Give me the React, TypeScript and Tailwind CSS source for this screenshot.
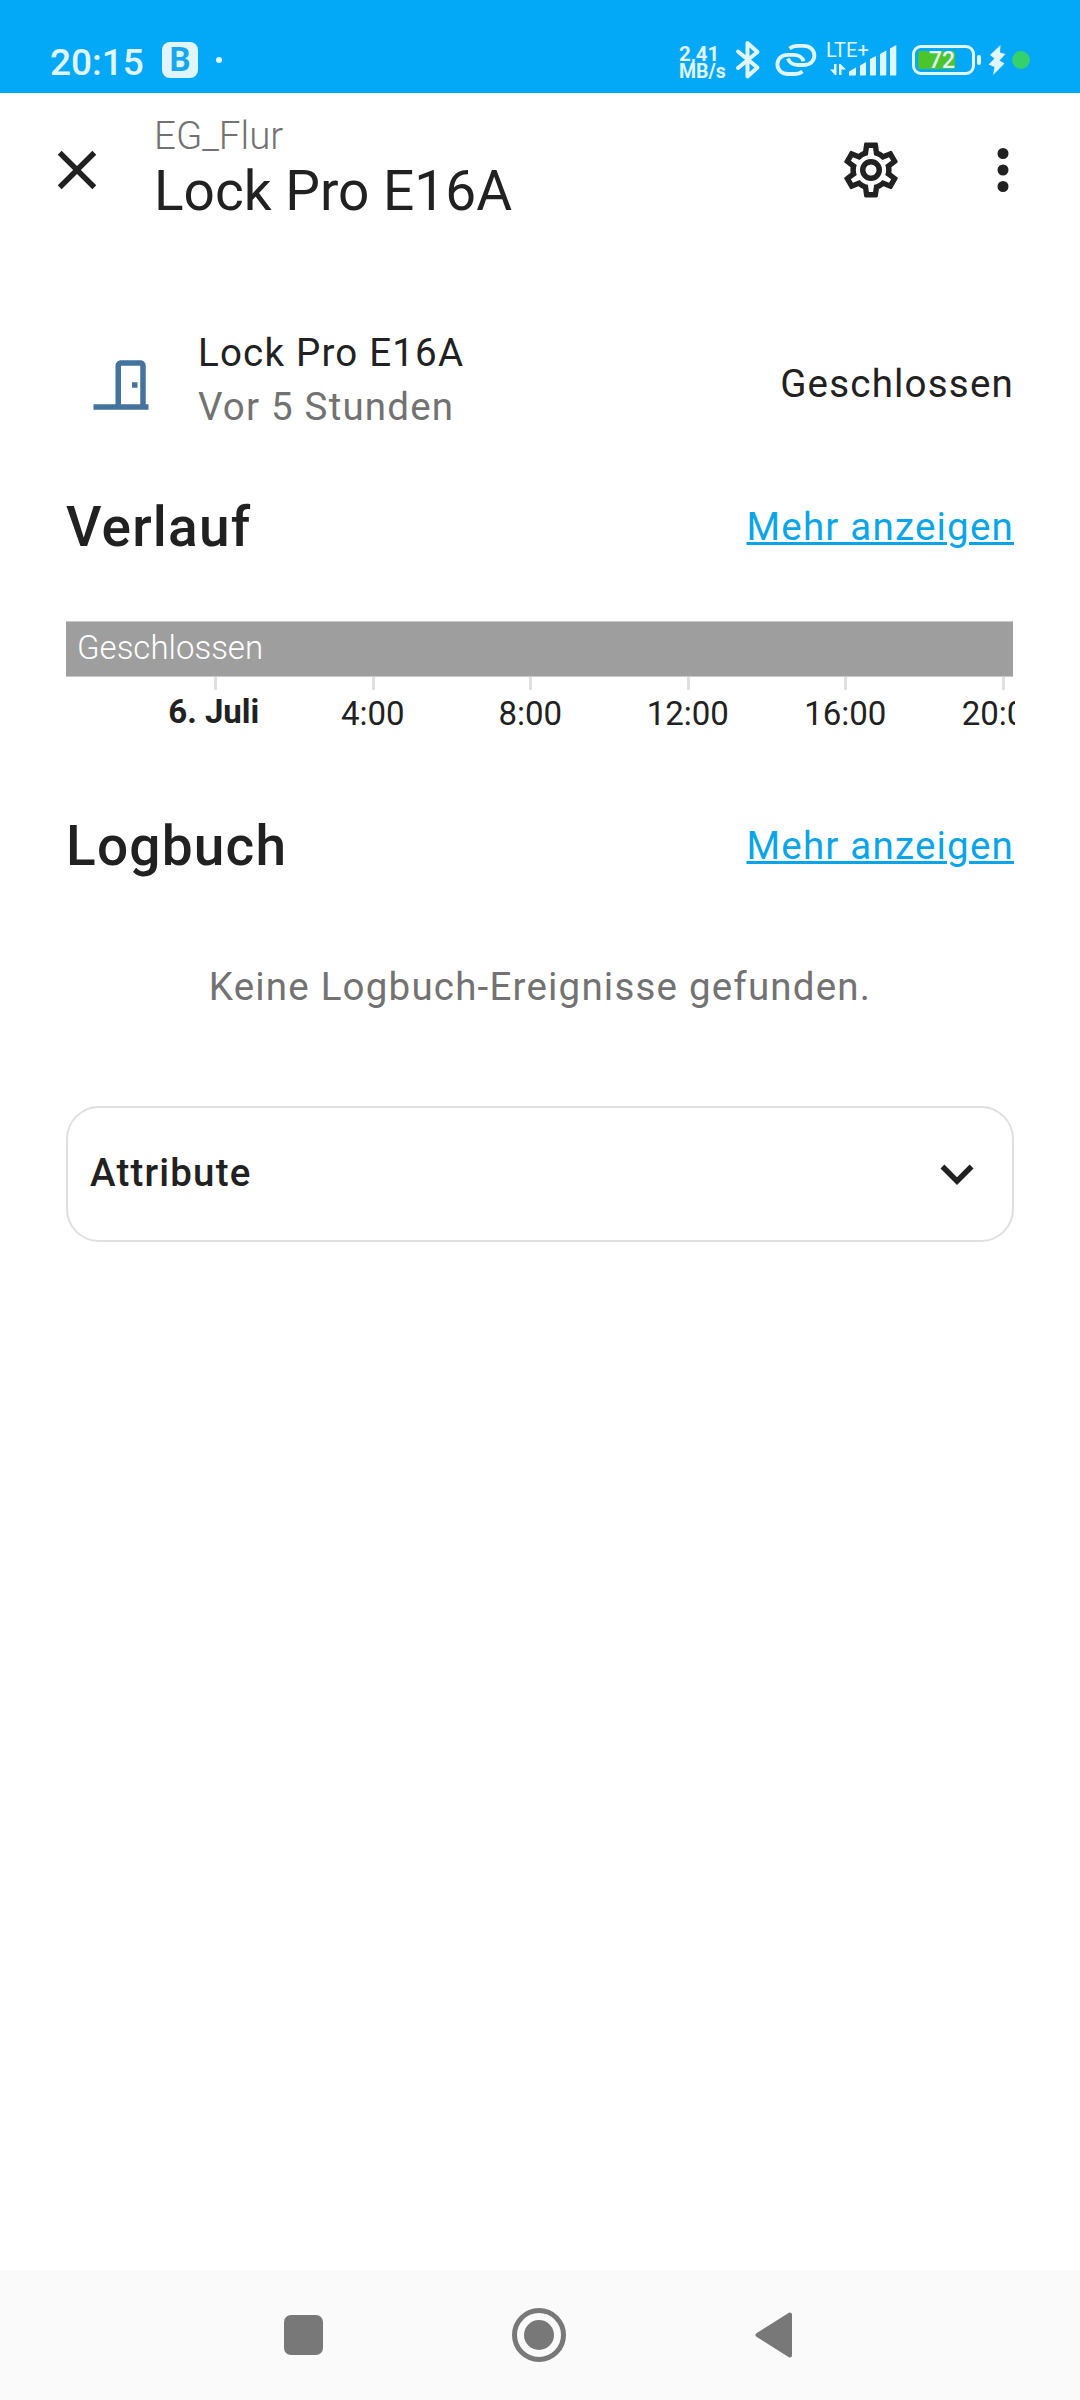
import type { ReactNode } from "react";

const icons = {
  close:
    "M19,6.41L17.59,5L12,10.59L6.41,5L5,6.41L10.59,12L5,17.59L6.41,19L12,13.41L17.59,19L19,17.59L13.41,12L19,6.41Z",
  cog: "M12,8A4,4 0 0,1 16,12A4,4 0 0,1 12,16A4,4 0 0,1 8,12A4,4 0 0,1 12,8M12,10A2,2 0 0,0 10,12A2,2 0 0,0 12,14A2,2 0 0,0 14,12A2,2 0 0,0 12,10M10,22C9.75,22 9.54,21.82 9.5,21.58L9.13,18.93C8.5,18.68 7.96,18.34 7.44,17.94L4.95,18.95C4.73,19.03 4.46,18.95 4.34,18.73L2.34,15.27C2.21,15.05 2.27,14.78 2.46,14.63L4.57,12.97L4.5,12L4.57,11L2.46,9.37C2.27,9.22 2.21,8.95 2.34,8.73L4.34,5.27C4.46,5.05 4.73,4.96 4.95,5.05L7.44,6.05C7.96,5.66 8.5,5.32 9.13,5.07L9.5,2.42C9.54,2.18 9.75,2 10,2H14C14.25,2 14.46,2.18 14.5,2.42L14.87,5.07C15.5,5.32 16.04,5.66 16.56,6.05L19.05,5.05C19.27,4.96 19.54,5.05 19.66,5.27L21.66,8.73C21.79,8.95 21.73,9.22 21.54,9.37L19.43,11L19.5,12L19.43,13L21.54,14.63C21.73,14.78 21.79,15.05 21.66,15.27L19.66,18.73C19.54,18.95 19.27,19.04 19.05,18.95L16.56,17.95C16.04,18.34 15.5,18.68 14.87,18.93L14.5,21.58C14.46,21.82 14.25,22 14,22H10M11.25,4L10.88,6.61C9.68,6.86 8.62,7.5 7.85,8.39L5.44,7.35L4.69,8.65L6.8,10.2C6.4,11.37 6.4,12.64 6.8,13.8L4.68,15.36L5.43,16.66L7.86,15.62C8.63,16.5 9.68,17.14 10.87,17.38L11.24,20H12.76L13.13,17.39C14.32,17.14 15.37,16.5 16.14,15.62L18.57,16.66L19.32,15.36L17.2,13.81C17.6,12.64 17.6,11.37 17.2,10.2L19.31,8.65L18.56,7.35L16.15,8.39C15.38,7.5 14.32,6.86 13.12,6.62L12.75,4H11.25Z",
  dots: "M12,16A2,2 0 0,1 14,18A2,2 0 0,1 12,20A2,2 0 0,1 10,18A2,2 0 0,1 12,16M12,10A2,2 0 0,1 14,12A2,2 0 0,1 12,14A2,2 0 0,1 10,12A2,2 0 0,1 12,10M12,4A2,2 0 0,1 14,6A2,2 0 0,1 12,8A2,2 0 0,1 10,6A2,2 0 0,1 12,4Z",
  door: "M16,11H18V13H16V11M12,3H19C20.11,3 21,3.89 21,5V19H22V21H2V19H10V5C10,3.89 10.89,3 12,3M12,5V19H19V5H12Z",
  chevronDown:
    "M7.41,8.58L12,13.17L16.59,8.58L18,10L12,16L6,10L7.41,8.58Z",
};

const hours = ["4:00", "8:00", "12:00", "16:00", "20:00"];

const Icon = ({ path, className }: { path: string; className?: string }) => (
  <svg
    viewBox="0 0 24 24"
    fill="currentColor"
    className={`size-[66px] shrink-0 ${className ?? ""}`}
  >
    <path d={path} />
  </svg>
);

const StatusBar = () => (
  <div className="h-[93px] bg-[#03a9f7] flex items-start text-[#e1f5fe] pl-[50px] pr-[50px]">
    {/* clock + notifications  */}
    <span className="mt-[43px] w-[112px] text-[37px] leading-[40px] font-medium">
      20:15
    </span>
    <div className="mt-[42px] size-9 rounded-[8px] bg-[#e1f5fe] flex items-center justify-center">
      <span className="text-[33px] leading-9 font-bold text-[#17a7ee]">B</span>
    </div>
    <div className="mt-[57px] ml-[18px] size-[6px] rounded-full bg-[#e1f5fe]" />

    {/* network speed  */}
    <div className="ml-auto mt-[45px] w-[56px] text-[20.5px] leading-[18px] font-bold">
      <div>2,41</div>
      <div className="text-[19.5px]">MB/s</div>
    </div>

    {/* bluetooth  */}
    <svg
      viewBox="0 0 26 40"
      className="mt-[40px] w-[26px] h-[40px]"
      fill="none"
      stroke="currentColor"
      strokeWidth="4"
      strokeLinejoin="round"
      strokeLinecap="round"
    >
      <path d="M3 11.5 L22.5 27.5 L12.5 36.5 V3 L22.5 12 L3 28" />
    </svg>

    {/* link  */}
    <svg
      viewBox="0 0 42 34"
      className="mt-[43px] ml-[14px] w-[42px] h-[34px]"
      fill="none"
      stroke="currentColor"
      strokeWidth="3.8"
    >
      <path d="M14.5 5.5 C17 3.5 20 2.8 23 2.8 H28.5 C35 2.8 39.4 7 39.4 12.5 C39.4 18 35 22 28.5 22 H23 C18 22 14 19.5 13 15.5" />
      <path d="M27.5 28.4 C25 30.4 22 31 19 31 H13 C6.5 31 2.4 26.7 2.4 21.3 C2.4 16 6.5 11.8 13 11.8 H18.5 C23.5 11.8 27.5 14.3 28.5 18.3" />
    </svg>

    {/* mobile signal  */}
    <div className="relative ml-[9px] mt-[40px] w-[72px] h-[38px]">
      <svg viewBox="0 0 72 38" className="w-[72px] h-[38px]" fill="currentColor">
        <path d="M10.5 24 V35 H9 L4 29.5 H8 V24 Z" />
        <path d="M13 35 V24 H14.5 L20 29.5 H15.5 V35 Z" />
        <path d="M23 35.5 V31.5 L30 27.5 V34.5 Q30 35.5 29 35.5 Z" />
        <path d="M34 35.5 V25.5 L40 22 V34.5 Q40 35.5 39 35.5 Z" />
        <path d="M44 35.5 V19 L50 16 V34.5 Q50 35.5 49 35.5 Z" />
        <path d="M54 35.5 V14 L60.3 10.5 V34.5 Q60.3 35.5 59 35.5 Z" />
        <path d="M64 35.5 V8.5 L70.3 5 V34.5 Q70.3 35.5 69 35.5 Z" />
      </svg>
      <span className="absolute left-0 top-0 text-[20px] leading-[20px]">
        LTE+
      </span>
    </div>

    {/* battery  */}
    <div className="ml-[14px] mt-[45px] w-[63px] h-[30px] rounded-[9px] border-[3px] border-current p-[3px]">
      <div className="relative w-[37px] h-[18px] rounded-[2px] bg-[#4cc42b]">
        <span className="absolute left-[11px] top-0 text-[23px] leading-[20px] font-medium">
          72
        </span>
      </div>
    </div>
    <div className="ml-[2px] mt-[55px] w-1 h-[10px] rounded-[2px] bg-current" />
    <svg
      viewBox="0 0 18 30"
      className="ml-[7px] mt-[45px] w-[18px] h-[30px]"
      fill="currentColor"
    >
      <path d="M12.5 0 L2 10 L6.5 13.5 L0.5 19.5 L6.5 22 L5 30 L16.5 18.5 L11.5 15.5 L17.5 9 L12 7.5 Z" />
    </svg>
    <div className="ml-[6px] mt-[51px] size-[18px] rounded-full bg-[#35d16c]" />
  </div>
);

const Header = () => (
  <div className="h-[154px] flex items-center pl-[44px] pr-[44px]">
    <Icon path={icons.close} />
    <div className="ml-[44px] pb-[3px] grow">
      <div className="text-[38.5px] leading-[45px] font-light text-[#727272]">
        EG_Flur
      </div>
      <div className="text-[55px] leading-[66px]">Lock Pro E16A</div>
    </div>
    <Icon path={icons.cog} />
    <Icon path={icons.dots} className="ml-[66px]" />
  </div>
);

const SectionTitle = ({ children }: { children: ReactNode }) => (
  <div className="flex justify-between items-center h-[66px]">
    <h2 className="text-[55px] leading-[66px] font-medium tracking-[1.2px]">
      {children}
    </h2>
    <a className="text-[38.5px] leading-[54px] tracking-[1.2px] text-[#09a5e8] underline decoration-[3px]">
      Mehr anzeigen
    </a>
  </div>
);

const App = () => {
  return (
    <div className="w-[1080px] h-[2400px] flex flex-col bg-white text-[#212121] font-['Roboto',sans-serif] overflow-hidden">
      <StatusBar />
      <Header />

      <div className="px-[66px] grow flex flex-col">
        {/* entity state  */}
        <div className="mt-[79px] h-[108px] flex items-start text-[38.5px] leading-[54px] tracking-[1.2px]">
          <Icon path={icons.door} className="ml-[22px] mt-[26px] text-[#44739e]" />
          <div className="ml-[44px] grow">
            <div>Lock Pro E16A</div>
            <div className="text-[#727272]">Vor 5 Stunden</div>
          </div>
          <div className="mt-[31px]">Geschlossen</div>
        </div>

        {/* history  */}
        <div className="mt-[60px]">
          <SectionTitle>Verlauf</SectionTitle>
        </div>
        <div className="mt-[61px] w-[948.5px] overflow-hidden">
          <div className="w-[947px] h-14 border-y border-[#c8c8c8] bg-[#9e9e9e] px-[11px] text-[33px] leading-[52px] font-light text-white">
            Geschlossen
          </div>
          <div className="ml-[71px] flex text-[33px] leading-[40px]">
            <div className="w-[157.5px] shrink-0 flex flex-col items-center">
              <div className="w-[3px] h-[13px] bg-[#e0e0e0]" />
              <div className="mt-[2px] pr-[4px] font-bold">6. Juli</div>
            </div>
            {hours.map((hour) => (
              <div
                key={hour}
                className="w-[157.5px] shrink-0 flex flex-col items-center"
              >
                <div className="w-[3px] h-[13px] bg-[#e0e0e0]" />
                <div className="mt-1 pr-px">{hour}</div>
              </div>
            ))}
          </div>
        </div>

        {/* logbook  */}
        <div className="mt-[79px]">
          <SectionTitle>Logbuch</SectionTitle>
        </div>
        <div className="mt-[81px] text-center text-[38.5px] leading-[54px] tracking-[1.2px] text-[#727272]">
          Keine Logbuch-Ereignisse gefunden.
        </div>

        {/* attributes  */}
        <div className="mt-[92px] h-[136px] flex items-center justify-between rounded-[33px] border-2 border-[#e0e0e0] pl-[22px] pr-[22px]">
          <span className="pb-[2px] text-[38.5px] leading-[54px] font-medium tracking-[1.2px]">
            Attribute
          </span>
          <Icon path={icons.chevronDown} />
        </div>
      </div>

      {/* navigation bar  */}
      <div className="h-[130px] bg-[#fafafa] flex items-center text-[#787878] pl-[283.5px]">
        <div className="w-[39px] h-10 rounded-[7px] bg-current" />
        <div className="ml-[189.5px] size-[54px] rounded-full border-[5px] border-current flex items-center justify-center">
          <div className="size-[30px] rounded-full bg-current" />
        </div>
        <svg
          viewBox="0 0 38 46"
          className="ml-[189px] w-[38px] h-[46px]"
          fill="currentColor"
          stroke="currentColor"
          strokeWidth="4"
          strokeLinejoin="round"
        >
          <path d="M2.5 23 L35 2.5 V43.5 Z" />
        </svg>
      </div>
    </div>
  );
};

export default App;
